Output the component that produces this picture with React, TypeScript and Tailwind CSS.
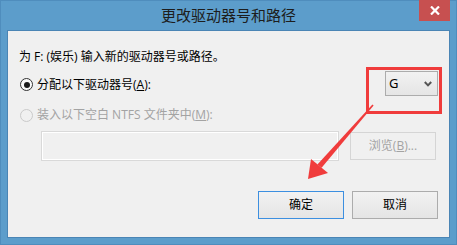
import React from "react";

const font = { fontFamily: '"Open Sans", "Noto Sans CJK SC", sans-serif' };

export default function App() {
  return (
    <div
      className="relative w-[457px] h-[245px] bg-[#5c9dcb] border border-[#4f8dbd] flex flex-col text-[12px] text-black"
      style={font}
    >
      {/* Title bar */}
      <div className="relative h-[29px] flex items-center justify-center">
        <span className="text-[15px] text-[#1d1d1d] leading-none -mt-[1px]">更改驱动器号和路径</span>
        <div className="absolute right-[6px] top-[-1px] w-[31px] h-[21px] bg-[#c75050] flex items-center justify-center">
          <svg width="10" height="9" viewBox="0 0 10 9">
            <path d="M1 0.5 L9 8.5 M9 0.5 L1 8.5" stroke="white" strokeWidth="2.2" />
          </svg>
        </div>
      </div>

      {/* Panel */}
      <div className="relative mx-[6px] h-[208px] border border-[#4a85b5] bg-[#f0f0f0] flex flex-col px-[11px] pt-[18px]">
        <div className="h-[16px] leading-[16px] whitespace-nowrap">为 F: (娱乐) 输入新的驱动器号或路径。</div>

        <div className="mt-[6px] h-[25px] flex items-center justify-between">
          <div className="flex items-center pt-[2px]">
            <div className="ml-[1px] w-[13px] h-[13px] rounded-full border border-[#333] bg-[#fafafa] flex items-center justify-center">
              <div className="w-[6px] h-[6px] rounded-full bg-[#1a1a1a]" />
            </div>
            <span className="ml-[4px] leading-[16px] whitespace-nowrap">
              分配以下驱动器号(<span className="underline">A</span>):
            </span>
          </div>
          <div className="w-[53px] h-[25px] border border-[#acacac] bg-gradient-to-b from-[#f2f2f2] to-[#e5e5e5] flex items-center justify-between pl-[3px] pr-[5px]">
            <span className="text-[13px] leading-none" style={{ fontFamily: '"Noto Sans", sans-serif' }}>G</span>
            <svg width="8" height="6" viewBox="0 0 8 6">
              <path d="M0.8 1 L4 4.4 L7.2 1" stroke="#555" strokeWidth="2" fill="none" />
            </svg>
          </div>
        </div>

        <div className="mt-[11px] h-[16px] flex items-center">
          <div className="ml-[1px] w-[13px] h-[13px] rounded-full border border-[#cacaca] bg-[#f0f0f0]" />
          <span className="ml-[4px] leading-[16px] whitespace-nowrap text-[#a3a3a3]">
            装入以下空白 NTFS 文件夹中(<span className="underline">M</span>):
          </span>
        </div>

        <div className="mt-[8px] h-[30px] flex items-center">
          <div className="ml-[22px] w-[298px] h-[30px] border border-[#d9d9d9] bg-[#f0f0f0]">
            <div className="w-full h-full border border-white" />
          </div>
          <div className="ml-[11px] w-[86px] h-[28px] border border-[#d5d5d5] bg-[#f0f0f0] flex items-center justify-center text-[#a3a3a3]">
            浏览(<span className="underline">B</span>)...
          </div>
        </div>

        <div className="mt-[30px] flex justify-end gap-[8px]">
          <div className="w-[86px] h-[28px] border border-[#3c8fe0] bg-gradient-to-b from-[#f2f2f2] to-[#e5e5e5] flex items-center justify-center">
            确定
          </div>
          <div className="w-[86px] h-[28px] border border-[#acacac] bg-gradient-to-b from-[#f2f2f2] to-[#e5e5e5] flex items-center justify-center">
            取消
          </div>
        </div>

        {/* Annotation box */}
        <div className="absolute left-[358px] top-[36px] w-[76px] h-[47px] border-[3px] border-[#f03c3c]" />
      </div>

      {/* Annotation arrow */}
      <svg className="absolute left-[-1px] top-[-1px] pointer-events-none" width="457" height="245" viewBox="0 0 457 245">
        <polygon
          points="372.4,104.6 373.6,105.4 321.6,167.8 317.4,164.4"
          fill="#f03c3c"
        />
        <polygon points="308,179 311,159 328,173" fill="#f03c3c" />
      </svg>
    </div>
  );
}
